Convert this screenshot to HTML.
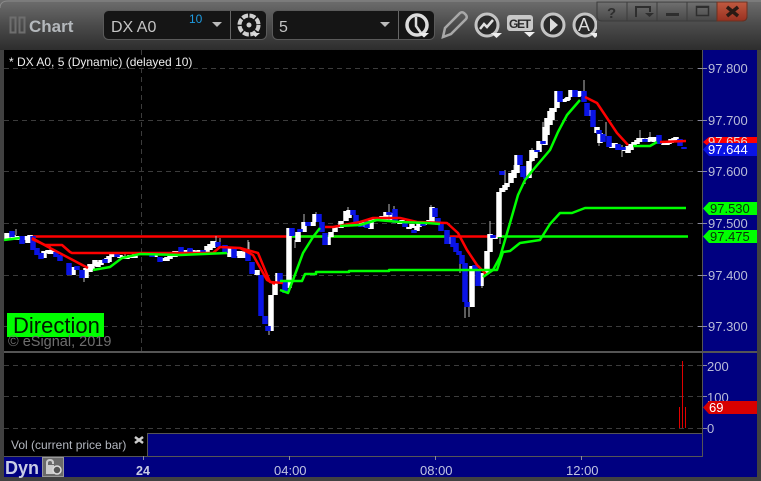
<!DOCTYPE html>
<html><head><meta charset="utf-8"><title>Chart</title>
<style>
html,body{margin:0;padding:0;background:#3a3a3a;width:761px;height:481px;overflow:hidden}
svg{display:block}
text{font-family:"Liberation Sans",sans-serif}
</style></head><body>
<svg width="761" height="481" viewBox="0 0 761 481" xmlns="http://www.w3.org/2000/svg">
<defs>
<linearGradient id="tb" x1="0" y1="0" x2="0" y2="1"><stop offset="0" stop-color="#6e6e6e"/><stop offset=".5" stop-color="#4b4b4b"/><stop offset="1" stop-color="#2d2d2d"/></linearGradient>
<linearGradient id="wb" x1="0" y1="0" x2="0" y2="1"><stop offset="0" stop-color="#707070"/><stop offset="1" stop-color="#484848"/></linearGradient>
<linearGradient id="cb" x1="0" y1="0" x2="0" y2="1"><stop offset="0" stop-color="#c05a40"/><stop offset="1" stop-color="#983020"/></linearGradient>
<clipPath id="ac"><rect x="570" y="0" width="27" height="50"/></clipPath>
</defs>
<rect width="761" height="481" fill="#414141"/>
<rect width="761" height="50" fill="url(#tb)"/>
<path d="M0 8Q0 1 8 1H761" fill="none" stroke="#8a8a8a"/>

<!-- title -->
<rect x="10.500" y="17.500" width="5" height="15" fill="none" stroke="#6e6e6e" stroke-width="2"/>
<rect x="19.500" y="17.500" width="5" height="15" fill="none" stroke="#6e6e6e" stroke-width="2"/>
<text x="29" y="32" font-size="17" font-weight="bold" fill="#b4b8bc">Chart</text>

<!-- combos -->
<rect x="103.500" y="10.500" width="163" height="29" rx="5" fill="#151515" stroke="#5a5a5a"/>
<line x1="230.500" y1="11" x2="230.500" y2="39" stroke="#666"/>
<text x="111" y="32" font-size="16" fill="#c4c4c4">DX A0</text>
<text x="189" y="23" font-size="12" fill="#1e9be0">10</text>
<path d="M212 22h10l-5 5z" fill="#bbb"/>
<circle cx="249" cy="25" r="9.500" fill="none" stroke="#d0d0d0" stroke-width="4" stroke-dasharray="6 1.500"/>
<circle cx="249" cy="25" r="2.500" fill="#d0d0d0"/>
<path d="M251 33h9l-4.500 4z" fill="#ddd"/>

<rect x="272.500" y="10.500" width="162" height="29" rx="5" fill="#151515" stroke="#5a5a5a"/>
<line x1="398.500" y1="11" x2="398.500" y2="39" stroke="#666"/>
<text x="279" y="32" font-size="16" fill="#c4c4c4">5</text>
<path d="M380 22h10l-5 5z" fill="#bbb"/>
<circle cx="417" cy="25" r="10" fill="none" stroke="#dcdcdc" stroke-width="3.500"/>
<path d="M416 17v9l5 7" fill="none" stroke="#dcdcdc" stroke-width="2.500"/>
<path d="M419 33h10l-5 4.500z" fill="#eee"/>

<!-- pencil -->
<path d="M443 37l2-9 15-15q2-1.500 4 0l2 2q1.500 2 0 4l-15 15z" fill="none" stroke="#a8a8a8" stroke-width="2.500"/>
<!-- trend -->
<circle cx="487" cy="25" r="11" fill="#2a2a2a" stroke="#c4c4c4" stroke-width="3"/>
<path d="M480 29l4-5 3 3 6-7" fill="none" stroke="#e0e0e0" stroke-width="2.500"/>
<path d="M491 33h11l-5.500 5z" fill="#eee"/>
<!-- GET -->
<rect x="507" y="15" width="26" height="16" rx="3" fill="#c8c8c8"/>
<text x="509" y="28" font-size="12" font-weight="bold" fill="#2a2a2a" font-family="Liberation Mono" textLength="22">GET</text>
<path d="M524 32h11l-5.500 5z" fill="#eee"/>
<!-- play -->
<circle cx="553" cy="25" r="11" fill="#2a2a2a" stroke="#c4c4c4" stroke-width="3"/>
<path d="M550 18l8 7-8 7z" fill="#dcdcdc"/>
<!-- A -->
<g clip-path="url(#ac)">
<circle cx="585" cy="25" r="11" fill="#2a2a2a" stroke="#c4c4c4" stroke-width="3"/>
<text x="578" y="31" font-size="18" fill="#dcdcdc">A</text>
<path d="M590 33h10l-5 5z" fill="#eee"/>
</g>

<!-- window buttons -->
<path d="M597 2H747V16Q747 21 742 21H602Q597 21 597 16Z" fill="url(#wb)" stroke="#3a3a3a"/>
<path d="M717 2H747V16Q747 21 742 21H717Z" fill="url(#cb)" stroke="#6a3020"/>
<path d="M627 2V21M657 2V21M687 2V21" stroke="#3c3c3c"/>
<text x="607" y="18" font-size="15" font-weight="bold" fill="#2e2e2e">?</text>
<path d="M636 17V7H650V12" fill="none" stroke="#2e2e2e" stroke-width="2"/><path d="M645 13h9l-4.500 4z" fill="#2e2e2e"/>
<rect x="666" y="13" width="13" height="3" fill="#2e2e2e"/>
<rect x="696.500" y="6.500" width="12" height="9" fill="none" stroke="#2e2e2e" stroke-width="1.500"/><rect x="696" y="6" width="13" height="2" fill="#2e2e2e"/>
<path d="M727 7l11 9M738 7l-11 9" stroke="#2a1a14" stroke-width="3.500"/>

<!-- panels -->
<rect x="4" y="50" width="699" height="407" fill="#000"/>
<rect x="703" y="50" width="54" height="427" fill="#000080"/>
<rect x="4" y="456" width="753" height="21" fill="#000080"/>
<rect x="147" y="433" width="556" height="23" fill="#000080"/>
<path d="M147.500 456V433.500H703" fill="none" stroke="#555"/>
<path d="M4 456.500H703" stroke="#555"/>
<path d="M702.500 50V456" stroke="#555"/>
<rect x="4" y="351" width="753" height="2" fill="#555"/>

<!-- grid -->
<g stroke="#3c3c3c" fill="none" stroke-dasharray="5 4">
<path d="M4 68.500H703M4 120.500H703M4 171.500H703M4 223.500H703M4 275.500H703M4 326.500H703M4 365.500H703M4 396.500H703M4 428.500H703"/>
<path d="M141.500 50V351"/>
</g>
<path d="M698 68.500h9M698 120.500h9M698 171.500h9M698 223.500h9M698 275.500h9M698 326.500h9M703 365.500h4M703 396.500h4M703 428.500h4M143.500 456v4M289.500 456v4M435.500 456v4M581.500 456v4" stroke="#8a8aa0"/>

<!-- level lines -->
<path d="M32 236.500H497" stroke="#f00" stroke-width="2.500" fill="none"/>
<path d="M292 236.500H447M497 236.500H688" stroke="#0f0" stroke-width="2.500" fill="none"/>

<!-- wicks -->
<path d="M16 229v6M50 246v6M84 272v10M125 252v6M216 236v8M220 238v6M249 242v8M248 240v20M269 331v4M304 214v18M295 240v8M316 212v10M348 207v6M389 204v10M394 206v6M431 205v4M460 255v18M465 302v16M469 305v12M490 221v14M482 280v8M505 170v22M514 165v10M532 148v14M543 122v10M584 80v12M599 130v16M606 122v14M525 178v6M622 145v12M640 130v10M650 132v8M530 150v8M500 238v6" stroke="#b8b8b8" fill="none"/>

<!-- white candles -->
<path fill="none" stroke="#fff" stroke-width="5.500" d="M16 236V240M50 251V254M92 264V270M101 260V265M107 258V263M115 254V257M120 255V258M130 255V258M148 252V255M155 254V257M163 258V261M170 255V259M178 251V255M185 250V253M193 250V254M199 250V253M210 244V250M238 251V256M246 251V258M359 222V226M362 221V226M368 220V227M379 217V221M382 216V220M392 213V220M402 220V224M412 224V228M424 222V225M429 220V224M505 185V190M514 170V178M535 152V158M547 118V135M552 108V120M567 98V101M581 91V96M615 143V148M625 147V151M631 144V150M637 140V144M642 138V142M651 137V141M664 142V145M669 141V144M674 138V141M7 233V240M13 235V240M20 236V240M25 236V240M28 236V243M30 235V241M44 251V258M48 250V253M53 250V254M73 267V275M86 268V278M90 264V272M95 260V266M98 262V267M109 256V262M112 253V257M124 256V259M127 256V259M135 253V258M140 252V255M145 252V255M167 257V261M175 251V257M190 249V253M196 251V254M207 246V252M213 241V248M230 248V257M240 251V258M243 252V258M257 270V275M271 295V331M275 283V295M278 273V283M289 228V288M298 232V242M304 222V232M313 222V226M315 214V222M328 237V245M331 232V237M335 226V232M341 221V228M346 211V221M349 210V218M365 221V227M371 219V229M376 217V221M386 212V221M400 222V224M409 227V229M417 226V231M419 222V227M427 222V224M432 207V223M448 237V244M472 266V307M481 273V286M487 251V273M490 234V252M495 237V239M499 192V237M502 188V192M507 183V187M511 173V183M517 155V173M529 161V178M532 150V161M539 141V152M545 127V145M550 111V125M554 108V112M557 91V108M564 99V102M568 97V100M571 90V97M578 91V97M583 91V96M589 110V116M597 127V133M600 133V143M612 143V148M622 147V150M628 146V153M634 142V147M639 138V142M648 138V142M654 137V142M667 143V145M671 139V143M676 137V140"/>
<!-- blue candles -->
<path fill="none" stroke="#0a14e6" stroke-width="5.500" d="M12 231V237M22 236V244M33 236V250M37 248V255M41 253V259M56 252V257M60 255V261M69 263V275M77 266V270M82 270V278M105 259V263M117 254V257M152 253V257M160 257V262M181 247V252M190 248V252M203 250V253M218 242V247M225 245V253M234 248V258M248 250V261M252 262V274M261 275V316M265 316V324M268 326V331M280 273V283M285 282V293M292 228V236M300 229V232M308 222V226M319 214V222M322 222V232M325 233V245M353 210V215M356 215V225M361 224V227M367 221V228M389 212V215M395 209V223M405 222V227M414 230V233M423 222V226M435 208V217M438 218V225M441 223V231M447 230V244M453 237V247M456 243V252M459 251V255M462 255V264M465 263V302M467 302V307M475 265V269M478 269V286M493 235V238M502 171V175M520 155V165M523 166V177M526 177V179M537 150V152M543 141V144M560 91V102M575 90V97M584 91V102M587 103V116M593 110V127M599 130V134M603 134V142M609 136V147M618 144V150M623 147V150M645 139V142M659 135V144M680 139V146M684 147V149"/>

<!-- MA lines -->
<g fill="none" stroke-linejoin="round">
<path stroke="#f00" stroke-width="2.500" d="M32 239L45 245H62L70 252L72 253H213L220 247L240 248L258 253L270 282L283 283"/>
<path stroke="#f00" stroke-width="2.500" d="M32 238L50 248L88 268M240 248L253 255L267 280L275 284"/>
<path stroke="#f00" stroke-width="2.500" d="M325 227H333L360 222L373 218L400 218L417 222L447 223L458 233L467 250L477 265L487 275"/>
<path stroke="#f00" stroke-width="2.500" d="M585 97L597 103L607 118L617 133L628 145M660 142L686 141"/>
<path stroke="#0f0" stroke-width="2.500" d="M4 240L20 238M93 270L110 267L122 258L140 254L180 255L227 253M280 290L288 293L293 280L303 253L313 237L320 228M340 226L360 225L377 220L400 222L427 223L440 224M483 277L493 270L500 257L510 223L518 195L525 180L533 170L550 150L558 132L567 115L580 100M633 146H650L657 142"/>
<path stroke="#0f0" stroke-width="2.500" d="M280 281H302L305 274H316V272H349V271H389V270H497L503 252L510 251L520 243L540 240L550 224L560 213H572L585 208H686"/>
</g>

<!-- legend / watermark -->
<text x="9" y="66" font-size="12" fill="#eee">* DX A0, 5 (Dynamic) (delayed 10)</text>
<rect x="7" y="313" width="97" height="24" fill="#0f0"/>
<text x="13" y="333" font-size="22" fill="#001800">Direction</text>
<text x="8" y="346" font-size="14.500" fill="#6e6e6e">© eSignal, 2019</text>

<!-- price axis -->
<g font-size="13" fill="#b9bcd8">
<text x="708" y="73">97.800</text>
<text x="708" y="125">97.700</text>
<text x="708" y="176">97.600</text>
<text x="708" y="228">97.500</text>
<text x="708" y="280">97.400</text>
<text x="708" y="331">97.300</text>
<text x="707" y="371">200</text>
<text x="707" y="402">100</text>
<text x="707" y="433">0</text>
</g>
<path d="M703 142L709 137H757V147H709Z" fill="#f00"/>
<text x="708" y="146" font-size="13" fill="#ddd">97.656</text>
<path d="M703 149.500L709 143H757V156H709Z" fill="#0a14e6"/>
<text x="708" y="154" font-size="13" fill="#fff">97.644</text>
<path d="M703 208.500L709 202H757V215H709Z" fill="#0f0"/>
<text x="710" y="213" font-size="13" fill="#0a300a">97.530</text>
<path d="M703 236.500L709 230H757V243H709Z" fill="#0f0"/>
<text x="710" y="241" font-size="13" fill="#0a300a">97.475</text>
<path d="M703 407.500L709 401H757V414H709Z" fill="#d80000"/>
<text x="709" y="412" font-size="13" fill="#fff">69</text>

<!-- volume -->
<path d="M682.500 361V428M679.500 407V428M685.500 407V428" stroke="#e00000" fill="none"/>
<text x="11" y="449" font-size="12" fill="#b4b8c0">Vol (current price bar)</text>
<path d="M135 437l8 6M143 437l-8 6" stroke="#ccc" stroke-width="2.500"/>

<!-- time axis -->
<text x="5" y="474" font-size="18" font-weight="bold" fill="#c8cce4">Dyn</text>
<rect x="42.500" y="457.500" width="21" height="19" fill="#6a6a6a" stroke="#999"/>
<path d="M47 465v-2q0-3 3-3t3 3v1" fill="none" stroke="#ccc" stroke-width="2"/>
<rect x="46" y="465" width="8" height="9" fill="#ccc"/>
<circle cx="57" cy="470" r="4" fill="#555" stroke="#ddd" stroke-width="1.500"/>
<text x="136" y="475" font-size="12.500" font-weight="bold" fill="#c8cce4">24</text>
<g font-size="13" fill="#c0c4e0">
<text x="274" y="475">04:00</text>
<text x="420" y="475">08:00</text>
<text x="566" y="475">12:00</text>
</g>
</svg>
</body></html>
